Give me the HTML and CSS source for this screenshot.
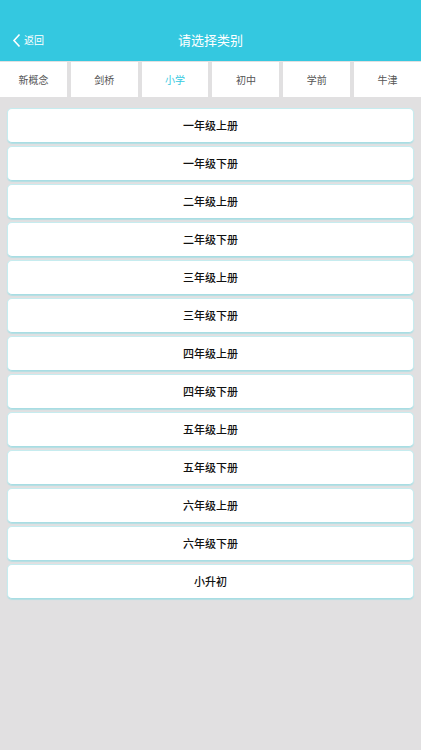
FILE: index.html
```html
<!DOCTYPE html>
<html lang="zh-CN">
<head>
  <meta charset="UTF-8" />
  <meta name="viewport" content="width=device-width, initial-scale=1.0" />
  <title>请选择类别</title>
  <link rel="stylesheet" href="styles.css">
</head>
<body>
  <header class="top-bar">
    <a class="back" href="#">
      <svg width="9" height="15" viewBox="0 0 9 15"><path d="M7.5 1.5 L2 7.5 L7.5 13.5" fill="none" stroke="#fff" stroke-width="1.6"/></svg>
      <span>返回</span>
    </a>
    <h1>请选择类别</h1>
  </header>

  <nav class="tabs">
    <div class="tab">新概念</div>
    <div class="tab">剑桥</div>
    <div class="tab active">小学</div>
    <div class="tab">初中</div>
    <div class="tab">学前</div>
    <div class="tab">牛津</div>
  </nav>

  <ul class="list">
    <li>一年级上册</li>
    <li>一年级下册</li>
    <li>二年级上册</li>
    <li>二年级下册</li>
    <li>三年级上册</li>
    <li>三年级下册</li>
    <li>四年级上册</li>
    <li>四年级下册</li>
    <li>五年级上册</li>
    <li>五年级下册</li>
    <li>六年级上册</li>
    <li>六年级下册</li>
    <li>小升初</li>
  </ul>
</body>
</html>
```
FILE: styles.css
```css
html, body {
  margin: 0;
  padding: 0;
}
body {
  font-family: "Noto Sans CJK SC", "Noto Sans", sans-serif;
  background-color: #e1e0e1;
  min-height: 750px;
}
.top-bar {
  height: 61px;
  background-color: #34c8e0;
  position: relative;
  display: flex;
  align-items: flex-end;
  justify-content: center;
  box-sizing: border-box;
  padding-bottom: 12px;
}
.top-bar h1 {
  margin: 0;
  font-size: 13px;
  font-weight: normal;
  color: #fff;
  line-height: 18px;
}
.back {
  position: absolute;
  left: 12px;
  bottom: 13px;
  display: flex;
  align-items: center;
  gap: 3px;
  color: #fff;
  text-decoration: none;
  font-size: 10px;
  line-height: 16px;
}
.tabs {
  display: flex;
  gap: 4px;
  margin-top: 1px;
}
.tab {
  flex: 1;
  height: 35px;
  line-height: 35px;
  background-color: #fff;
  text-align: center;
  font-size: 10px;
  color: #555;
}
.tab.active {
  color: #34c8e0;
}
.list {
  list-style: none;
  margin: 11px 7px 0;
  padding: 0;
  display: flex;
  flex-direction: column;
  gap: 3px;
}
.list li {
  height: 33px;
  line-height: 33px;
  background-color: #fff;
  border: 1px solid #c6ecef;
  border-bottom-color: #a8dde3;
  border-radius: 5px;
  box-shadow: 0 1px 1px #b3dfe4;
  text-align: center;
  font-size: 11px;
  font-weight: 500;
  color: #111;
}
```
